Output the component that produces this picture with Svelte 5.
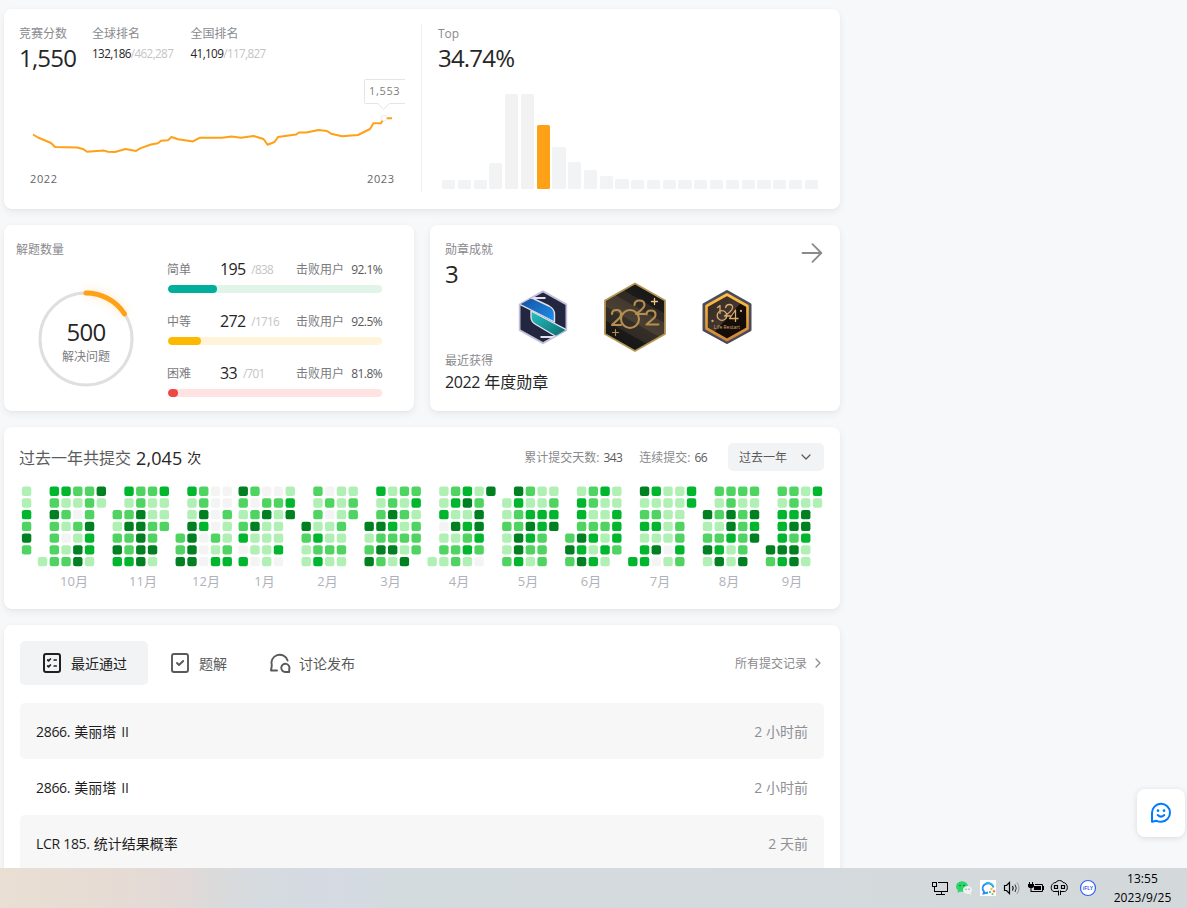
<script>
  const histogram = [9, 9, 9, 26, 95, 95, 64, 42, 27, 19, 13, 10, 9, 9, 9, 9, 9, 9, 9, 9, 9, 9, 9, 9];
  const levels = [
    { name: '简单', cls: 'easy', solved: 195, total: 838, beats: '92.1%', w: 49 },
    { name: '中等', cls: 'medium', solved: 272, total: 1716, beats: '92.5%', w: 33 },
    { name: '困难', cls: 'hard', solved: 33, total: 701, beats: '81.8%', w: 10 }
  ];
  const months = [
    { label: '', x: 74, cols: ['113242-'] },
    { label: '10月', x: 74, cols: ['------1', '3242222', '3121012', '2102144', '2224331', '41'] },
    { label: '11月', x: 143, cols: ['--21243', '3124223', '2244444', '2112241', '3112'] },
    { label: '12月', x: 206, cols: ['----224', '3114444', '2243000', '0000213', '0021123'] },
    { label: '1月', x: 264.5, cols: ['4212303', '2024110', '0241111', '0211130', '134'] },
    { label: '2月', x: 327.5, cols: ['---4211', '2121323', '0201121', '1112121', '122'] },
    { label: '3月', x: 390.5, cols: ['---4124', '3124242', '1243241', '2121214', '231222'] },
    { label: '4月', x: 459, cols: ['------1', '1130121', '2314122', '3413231', '1244320', '4'] },
    { label: '5月', x: 528, cols: ['-112112', '4322443', '2134321', '1133222', '1234'] },
    { label: '6月', x: 591, cols: ['----242', '1332434', '2212313', '3112131', '113332'] },
    { label: '7月', x: 660, cols: ['------3', '4123133', '3123140', '1111101', '1112232', '33'] },
    { label: '8月', x: 729, cols: ['--41241', '2121234', '2244311', '2122224', '21434'] },
    { label: '9月', x: 792, cols: ['-----42', '2133343', '2234244', '1144311', '31'] }
  ];
  const palette = ['#f4f4f4', '#b0f0b5', '#4fd462', '#00b62c', '#008020'];
  const cells = [];
  let cx = 1.9;
  for (const m of months) {
    for (const col of m.cols) {
      [...col].forEach((v, r) => {
        if (v !== '-') cells.push({ x: cx, y: 0.5 + r * 11.73, fill: palette[+v] });
      });
      cx += 11.75;
    }
    cx += 4.22;
  }
  const records = [
    ['2866.', '美丽塔', 'II', '2', '小时前'],
    ['2866.', '美丽塔', 'II', '2', '小时前'],
    ['LCR 185.', '统计结果概率', '', '2', '天前']
  ];
</script>

<div class="screen">
  <main>
    <section class="card contest">
      <div class="rating">
        <div class="stats">
          <div><p class="label">竞赛分数</p><p class="big n">1,550</p></div>
          <div class="rank"><p class="label">全球排名</p><p class="sm">132,186<i>/462,287</i></p></div>
          <div class="rank r2"><p class="label">全国排名</p><p class="sm">41,109<i>/117,827</i></p></div>
        </div>
        <svg class="line" width="385" height="115" viewBox="20 77 385 115">
          <path d="M33 134.5 38 137.5 51 143 55 147 77 147.5 83 149 87 151.8 104 150.6 108 151.8 115 152 125.5 149 136 151 140 148.4 151 144.5 158 143.3 161 140.8 168 140.3 171.5 137 178 139.3 193 141.4 199.5 137.8 222 137.8 231.5 136.4 241 137.8 253.5 136 263.5 139 267.5 144.8 274.5 142 278 137 296 134.6 299 132.5 306.5 132.4 318.5 130 327 131 331 133.7 342 136.3 358 135 370 129 373.5 123.3 381 123.2 384 118.3 392 118.3" fill="none" stroke="#ffa116" stroke-width="2" stroke-linejoin="round" />
          <path d="M406 79.5H365.500q-1 0-1 1V102.500q0 1 1 1H378L383.500 109.500 389.500 103.500H406" fill="#fff" stroke="#e5e5e5" />
          <circle cx="384" cy="118" r="2.7" fill="#fff" stroke="#ebebeb" />
          <text x="369" y="95" class="tip">1,553</text>
          <text x="30" y="183" class="year">2022</text>
          <text x="367" y="183" class="year">2023</text>
        </svg>
      </div>
      <div class="top">
        <p class="label">Top</p>
        <p class="big n">34.74%</p>
        <div class="bars">
          {#each histogram as h, i}
            <span class:on={i === 6} class:tall={h === 95} style="height:{h}px"></span>
          {/each}
        </div>
      </div>
    </section>

    <div class="pair">
      <section class="card solved">
        <div class="total">
          <p class="label">解题数量</p>
          <div class="ring">
            <svg width="120" height="120" viewBox="0 0 120 120">
              <circle cx="60" cy="60" r="46" fill="none" stroke="#dfdfdf" stroke-width="3" />
              <path d="M60 14A46 46 0 0 1 98.500 34.800" class="glow" />
              <path d="M60 14A46 46 0 0 1 98.500 34.800" fill="none" stroke="#ffa116" stroke-width="5" stroke-linecap="round" />
            </svg>
            <div class="count"><b class="n">500</b><span>解决问题</span></div>
          </div>
        </div>
        <div class="levels">
          {#each levels as l}
            <div class="level {l.cls}">
              <div class="info">
                <span class="name">{l.name}</span>
                <span class="num">{l.solved}</span>
                <span class="of">/{l.total}</span>
                <span class="beat">击败用户</span>
                <span class="pct">{l.beats}</span>
              </div>
              <div class="track"><div class="fill" style="width:{l.w}px"></div></div>
            </div>
          {/each}
        </div>
      </section>

      <section class="card medals">
        <div class="head">
          <div><p class="label">勋章成就</p><p class="big n">3</p></div>
          <svg width="24" height="24" viewBox="0 0 24 24" fill="none" stroke="#8a8a8e" stroke-width="1.8" stroke-linecap="round" stroke-linejoin="round"><path d="M2.500 12H21M12.500 3.200 21.300 12 12.500 20.800" /></svg>
        </div>
        <svg class="badges" width="250" height="76" viewBox="510 280 250 76">
          <defs>
            <linearGradient id="gold" x1="0" y1="0" x2="1" y2="1"><stop offset="0" stop-color="#e2bd73" /><stop offset=".5" stop-color="#8d6e3e" /><stop offset="1" stop-color="#d9b56d" /></linearGradient>
            <linearGradient id="brown" gradientUnits="userSpaceOnUse" x1="652" y1="287" x2="618" y2="347"><stop offset="0" stop-color="#171717" /><stop offset=".24" stop-color="#1c1b1a" /><stop offset=".25" stop-color="#2e2a25" /><stop offset=".36" stop-color="#312b25" /><stop offset=".37" stop-color="#443a2f" /><stop offset=".57" stop-color="#4a3f33" /><stop offset=".58" stop-color="#352f28" /><stop offset=".75" stop-color="#302b26" /><stop offset=".76" stop-color="#1b1a19" /><stop offset="1" stop-color="#151515" /></linearGradient>
            <linearGradient id="blue" x1="0" y1="0" x2="1" y2="1"><stop offset="0" stop-color="#174e9b" /><stop offset="1" stop-color="#1b91ed" /></linearGradient>
            <linearGradient id="teal" x1="0" y1="0" x2="1" y2="1"><stop offset="0" stop-color="#26c3c1" /><stop offset="1" stop-color="#0b6970" /></linearGradient>
            <linearGradient id="orange" x1="0" y1="0" x2="0" y2="1"><stop offset="0" stop-color="#ffc044" /><stop offset="1" stop-color="#d08638" /></linearGradient>
            <linearGradient id="night" x1="0" y1="0" x2="1" y2="1"><stop offset="0" stop-color="#352821" /><stop offset=".5" stop-color="#42362f" /><stop offset=".52" stop-color="#170e09" /><stop offset="1" stop-color="#100a06" /></linearGradient>
            <clipPath id="hex"><path d="M543 292 566 304.500V330L543 343 520 330V304.500Z" /></clipPath>
          </defs>
          <path d="M543 291.500 566 304.500V330L543 343 520 330V304.500Z" fill="#25294a" stroke="#c3bdd9" stroke-width="2.400" stroke-linejoin="round" />
          <path d="M543 292.500 565.500 305V329.500L543 342 520.500 329.500V305Z" fill="#22263f" />
          <g clip-path="url(#hex)" stroke="#e2e0ed" stroke-width="1.400" stroke-linejoin="round">
            <path d="M519 304 531 297.500 549 306Q554.500 309 554.500 314V322L543 316 519 304Z" fill="url(#blue)" />
            <path d="M531 311 567 330 556 336.500 535 324Q531 321.500 531 317Z" fill="url(#teal)" />
            <path d="M531 298H545.500M540.500 337H556" stroke-width="1.800" fill="none" />
          </g>
          <path d="M635 283.500 665 300.500V334L635 351 605 334V300.500Z" fill="url(#brown)" stroke="#b69656" stroke-width="1.800" stroke-linejoin="round" />
          <g fill="none" stroke="#b58f51" stroke-width="2.100" stroke-linejoin="round" stroke-linecap="round">
            <path d="M612 314Q612 310 616.500 310Q621 310 621 314Q621 316 619.500 318L612 325H621" />
            <circle cx="630" cy="319" r="9" />
            <path d="M634.500 305Q634.500 300.500 639.500 300.500Q644.500 300.500 644.500 305Q644.500 308 636 314H645" />
            <path d="M646.500 314.500Q646.500 310.500 651 310.500Q655.500 310.500 655.500 314.500Q655.500 316.500 654 318L646.500 324.500H658.500" />
            <path d="M654.500 298.500V304.500M651.500 301.500H657.500" stroke="#edc77c" stroke-width="1.300" /><path d="M615.500 329.500V335.500M612.500 332.500H618.500" stroke-width="1.100" />
          </g>
          <path d="M727 291.500 750 304.500V330L727 342.500 704 330V304.500Z" fill="#453f48" stroke="#4a4b59" stroke-width="3" stroke-linejoin="round" />
          <path d="M727 294.500 747.500 306V328.500L727 340 706.500 328.500V306Z" fill="url(#night)" stroke="url(#orange)" stroke-width="2.600" stroke-linejoin="round" />
          <g fill="none" stroke="#d8ae70" stroke-width="1.300" stroke-linejoin="round">
            <path d="M717 308 720 305.500V314" /><circle cx="722" cy="315.500" r="4.800" />
            <path d="M725.500 308Q726 304.500 729.500 304.500Q733 304.500 732.500 308Q732 311 724.500 316H731" />
            <path d="M735.500 322V310L729.500 318.500H738.500" />
            <circle cx="741" cy="311" r=".5" /><circle cx="712.500" cy="321" r=".5" />
          </g>
          <text x="727" y="328.800" class="life">Life Restart</text>
        </svg>
        <div class="latest"><p class="label">最近获得</p><p class="medal"><span>2022</span> 年度勋章</p></div>
      </section>
    </div>

    <section class="card calendar">
      <div class="head">
        <h2>过去一年共提交<b>2,045</b><em>次</em></h2>
        <p>累计提交天数:<b>343</b></p>
        <p class="streak">连续提交:<b>66</b></p>
        <button><span>过去一年</span><svg width="12" height="12" viewBox="0 0 12 12" fill="none" stroke="#595959" stroke-width="1.200" stroke-linecap="round" stroke-linejoin="round"><path d="M2 4 6 8 10 4" /></svg></button>
      </div>
      <svg class="heat" width="804" height="108" viewBox="0 0 804 108">
        {#each cells as c}<rect x={c.x} y={c.y} width="9.400" height="9.400" rx="2.200" fill={c.fill} />{/each}
        {#each months as m}<text x={m.x - 20} y="99.500">{m.label}</text>{/each}
      </svg>
    </section>

    <section class="card recent">
      <nav>
        <div class="tab active">
          <svg width="24" height="24" viewBox="0 0 24 24" fill="none" stroke="currentColor" stroke-width="2" stroke-linecap="round" stroke-linejoin="round"><rect x="4" y="3" width="16" height="18" rx="2" /><path d="M7.700 9 8.600 9.800 10.400 8M14.200 9H16.200M7.700 15 8.600 15.800 10.400 14M14.200 15H16.200" stroke-width="1.700" /></svg>
          <span>最近通过</span>
        </div>
        <div class="tab">
          <svg width="24" height="24" viewBox="0 0 24 24" fill="none" stroke="currentColor" stroke-width="1.900" stroke-linecap="round" stroke-linejoin="round"><rect x="4" y="3" width="16" height="18" rx="2" /><path d="M9 12 11 14 15.200 10" /></svg>
          <span>题解</span>
        </div>
        <div class="tab talk">
          <svg width="24" height="24" viewBox="0 0 24 24" fill="none" stroke="currentColor" stroke-width="1.900" stroke-linecap="round" stroke-linejoin="round"><path d="M19.600 9.500A8.200 8.200 0 1 0 3.800 14.500L3 19.500H9" /><path d="M21.200 21H17.300A4.100 4.100 0 1 1 21.200 18.300Z" /></svg>
          <span>讨论发布</span>
        </div>
        <div class="all"><span>所有提交记录</span><svg width="8" height="12" viewBox="0 0 8 12" fill="none" stroke="#8a8a8e" stroke-width="1.200" stroke-linecap="round" stroke-linejoin="round"><path d="M2 2 6 6 2 10" /></svg></div>
      </nav>
      {#each records as r, i}
        <div class="row" class:odd={i % 2 === 0}>
          <p class="title"><span class="l">{r[0]}</span>{r[1]}{#if r[2]}<span class="ii">{r[2]}</span>{/if}</p>
          <p class="ago"><span>{r[3]}</span> {r[4]}</p>
        </div>
      {/each}
    </section>
  </main>

  <div class="feedback">
    <svg width="24" height="24" viewBox="0 0 24 24" fill="none" stroke="#007aff" stroke-width="2" stroke-linecap="round" stroke-linejoin="round"><path d="M3 20.800V12A9 9 0 1 1 12.200 20.800Q9.500 20.800 7.500 19.800Z" /><path d="M8.700 14Q12 17.200 15.300 14" /><path d="M9 9.600V9.700M15 9.600V9.700" stroke-width="2.600" /></svg>
  </div>

  <footer>
    <div class="tray">
      <svg width="172" height="24" viewBox="930 876 172 24">
        <g fill="none" stroke="#000" shape-rendering="crispEdges"><path d="M938 882.500H947.500V891.500H934.500V887M941.500 892V894.500M936 894.500H945M932.500 882.500H936.500V886.500H932.500ZM934.500 886V891" /></g>
        <ellipse cx="962" cy="886.500" rx="6" ry="5.200" fill="#2bd56a" /><path d="M958 890 957.500 893 961 891Z" fill="#2bd56a" /><ellipse cx="967.500" cy="890" rx="4.500" ry="3.900" fill="#f0f2f1" /><path d="M968 893H971V895Z" fill="#f0f2f1" /><circle cx="960" cy="885.500" r=".8" fill="#08752e" /><circle cx="964" cy="885.500" r=".8" fill="#08752e" /><circle cx="966" cy="889.200" r=".6" fill="#777" /><circle cx="969" cy="889.200" r=".6" fill="#777" />
        <rect x="980" y="880" width="16" height="16" fill="#fff" /><path d="M993.500 887.500A5.500 4.800 0 1 0 984 891.500L983.500 893.500 988 892.500" fill="none" stroke="#2c8df0" stroke-width="1.800" /><path d="M986 883A5.500 4.800 0 0 1 993 886" fill="none" stroke="#36b6ee" stroke-width="1.800" /><circle cx="991.500" cy="889" r="1.200" fill="#f7bd3e" /><circle cx="990" cy="892" r="1.100" fill="#3ab66b" /><circle cx="994" cy="891.200" r="1.200" fill="#f0813c" /><circle cx="992.500" cy="894" r="1.100" fill="#6ccb63" />
        <path d="M1004.500 885.500H1006.500L1009.500 882.500V893.500L1006.500 890.500H1004.500Z" fill="none" stroke="#000" stroke-width="1.200" /><path d="M1012.500 886Q1014 888 1012.500 890.500" fill="none" stroke="#000" stroke-width="1.200" /><path d="M1015 884.500Q1017.500 888 1015 892" fill="none" stroke="#333" /><path d="M1017 882.500Q1021 888 1017 894" fill="none" stroke="#999" />
        <path d="M1035 884.500H1042.500V891.500H1033.500" fill="none" stroke="#000" /><path d="M1034 886H1041V890H1034ZM1043 886H1044V890H1043ZM1028 884H1034V886Q1034 888 1031 888Q1028 888 1028 886ZM1029 882H1030V884H1029ZM1032 882H1033V884H1032ZM1030.500 888H1031.500V891H1034V892H1030.500Z" />
        <g fill="none" stroke="#000" stroke-width="1"><path d="M1058.500 890.500V895.500M1060.500 890.500V895M1056 882.500Q1056.500 880.500 1059.500 880.500Q1062.500 880.500 1063 882.500" /><path d="M1056 882.500C1050 882.500 1050 891.500 1054 891.500H1058.500M1063 882.500C1068.500 882.500 1068.500 891.500 1064.500 891.500H1060.500" /><path d="M1054.500 885.500H1057.500V888.500H1054.500ZM1061.500 885.500H1064.500V888.500H1061.500Z" stroke-width="1.200" /></g>
        <circle cx="1088" cy="888" r="7.500" fill="#fff" stroke="#365ee8" stroke-width="1.200" /><text x="1088" y="890" class="fly">iFLY</text>
      </svg>
    </div>
    <div class="clock"><span>13:55</span><span>2023/9/25</span></div>
  </footer>
</div>

<style>
  :global(body) { background: #f7f8fa; }
  .screen { position: relative; width: 1187px; height: 908px; overflow: hidden; background: #f7f8fa; color: #262626; font: 12px/16px "Open Sans", "Noto Sans CJK SC", sans-serif; display: flex; flex-direction: column; }
  p, h2 { margin: 0; font-weight: 400; }
  i, em { font-style: normal; }
  b { font-weight: 400; }
  main { width: 836px; height: 859px; padding: 9px 0 0 4px; display: flex; flex-direction: column; gap: 16px; flex: none; }
  .card { background: #fff; border-radius: 8px; box-shadow: 0 3px 8px rgba(0,0,0,.06), 0 1px 3px rgba(0,0,0,.03); box-sizing: border-box; flex: none; }
  .label { color: #8a8a8e; font-size: 12px; line-height: 16px; white-space: nowrap; }
  .big { font-size: 24px; line-height: 32px; }
  .n { letter-spacing: -.8px; }
  .contest { height: 200px; display: flex; }
  .rating { width: 417px; padding: 17px 0 0 16px; box-sizing: border-box; flex: none; }
  .stats { display: flex; height: 51px; margin-left: -1px; }
  .stats > div { width: 73px; }
  .stats > .rank { width: 98.500px; }
  .sm { font-size: 12px; letter-spacing: -.72px; line-height: 20px; margin-top: 1px; }
  .rank .sm { font-size: 11.700px; letter-spacing: -.62px; }
  .sm i { color: #c4c4c6; }
  .line { display: block; }
  .tip { font-size: 11px; fill: #7d7d7d; letter-spacing: .65px; }
  .year { font-size: 11px; fill: #666; letter-spacing: .6px; }
  .top { border-left: 1px solid #f0f0f1; margin: 15px 21px 17px 0; padding: 2px 0 0 16px; flex: 1; }
  .bars { height: 98px; margin: 17px 0 0 4px; width: 376px; display: flex; align-items: flex-end; justify-content: space-between; }
  .bars span { width: 13.200px; background: #f2f3f5; border-radius: 1.500px; }
  .bars .tall { background: #f2f2f2; }
  .bars .on { background: #ffa116; }
  .pair { display: grid; grid-template: 186px / 410px 410px; gap: 16px; height: 186px; flex: none; }
  .solved { display: flex; padding: 17px 32px 0 12px; }
  .total { width: 152px; flex: none; }
  .ring { width: 120px; height: 120px; margin: 21px 0 0 10px; display: grid; }
  .ring > * { grid-area: 1 / 1; }
  .ring svg { overflow: visible; }
  .glow { fill: none; stroke: #ffa116; stroke-width: 6; opacity: .25; filter: blur(5px); }
  .count { display: flex; flex-direction: column; align-items: center; padding-top: 37px; }
  .count b { font-size: 24px; line-height: 32px; }
  .count span { color: #7b7b80; line-height: 18px; }
  .levels { flex: 1; padding-top: 17px; }
  .level { height: 52px; }
  .info { display: flex; align-items: center; height: 22px; white-space: nowrap; }
  .name { width: 53px; color: #7b7b80; margin-left: -1px; }
  .num { font-size: 16px; letter-spacing: -.7px; margin-right: 6px; margin-top: -2px; }
  .of { color: #c4c4c6; font-size: 11.700px; letter-spacing: -.65px; margin-top: -3px; }
  .beat { margin-left: auto; color: #7b7b80; }
  .pct { width: 38px; text-align: right; color: #595959; letter-spacing: -.6px; }
  .track { height: 8px; margin-top: 4px; border-radius: 4px; overflow: hidden; }
  .fill { height: 8px; border-radius: 4px; }
  .easy .track { background: #e0f4e7; } .easy .fill { background: #00af9b; }
  .medium .track { background: #fff3da; } .medium .fill { background: #ffb800; }
  .hard .track { background: #ffe2e2; } .hard .fill { background: #ef4743; }
  .medals { padding: 17px 16px 0 15px; display: flex; flex-direction: column; }
  .medals .head { display: flex; justify-content: space-between; height: 38px; flex: none; }
  .head > svg { margin-top: -1px; }
  .badges { display: block; margin-left: 65px; flex: none; }
  .life { font: 5px "Open Sans", sans-serif; fill: #d8ae70; text-anchor: middle; }
  .latest .label { margin-top: -3px; }
  .medal { font-size: 16px; line-height: 24px; white-space: nowrap; margin-top: 1px; }
  .medal span { letter-spacing: -.4px; }
  .calendar { height: 182px; padding: 16px 16px 16px 15px; }
  .calendar .head { display: flex; align-items: center; height: 28px; color: #8a8a8e; white-space: nowrap; }
  .calendar .head p { padding-top: 2px; }
  h2 { flex: 1; font-size: 16px; color: #5c5c5c; display: flex; align-items: center; line-height: 28px; padding-top: 2px; }
  h2 b { font-size: 18px; letter-spacing: .1px; color: #262626; margin: 0 5px 0 5px; }
  h2 em { font-size: 14px; color: #262626; }
  .calendar p b { color: #595959; letter-spacing: -.6px; margin-left: 4px; }
  .calendar .streak { margin: 0 21px 0 17px; }
  button { border: 0; padding: 0 12px 0 11px; border-radius: 5px; width: 96px; height: 28px; background: #f2f3f5; color: #595959; font: inherit; display: flex; align-items: center; justify-content: space-between; }
  button span { padding-top: 1px; }
  .heat { display: block; margin: 15px 0 0 1px; }
  .heat text { font-size: 13px; fill: #afb2ba; text-anchor: middle; }
  .recent { height: 300px; padding: 16px; }
  nav { display: flex; align-items: center; height: 44px; margin-bottom: 18px; }
  .tab { display: flex; align-items: center; height: 44px; width: 100px; padding: 0 0 0 20px; box-sizing: border-box; color: #595959; font-size: 14px; gap: 7px; white-space: nowrap; }
  .tab span { padding-top: 2px; }
  .tab.active { width: 128px; background: #f2f3f5; border-radius: 5px; color: #202020; }
  .tab.talk { width: 150px; }
  .all { margin-left: auto; display: flex; align-items: center; gap: 7px; color: #8a8a8e; padding-right: 2px; }
  .all span { padding-top: 2px; }
  .row { height: 56px; padding: 1px 16px 0; display: flex; justify-content: space-between; align-items: center; font-size: 14px; border-radius: 5px; box-sizing: border-box; }
  .odd { background: #f7f7f7; }
  .title { color: #1d1d1d; }
  .title span { letter-spacing: -.3px; margin-right: 4px; }
  .title .ii { margin: 0 0 0 5px; letter-spacing: 0; }
  .ago { color: #8f8f95; }
  .feedback { position: absolute; left: 1137px; top: 789px; width: 48px; height: 48px; border-radius: 8px; background: #fff; box-shadow: 0 1px 6px rgba(0,0,0,.12); display: grid; place-items: center; }
  footer { position: relative; height: 40px; flex: none; background: linear-gradient(90deg, #e9dfd3 0, #e6dbd4 120px, #e3dad8 175px, #dadada 215px, #d6dbe0 260px, #d5dae3 335px, #d4dbdf 390px, #d4dadd 600px, #d3d9db 100%); color: #000; display: flex; justify-content: flex-end; }
  .tray { padding-top: 8px; width: 172px; }
  .tray svg { display: block; }
  .fly { font: bold 5px "Liberation Sans", sans-serif; fill: #365ee8; text-anchor: middle; }
  .clock { width: 85px; display: flex; flex-direction: column; align-items: center; line-height: 19px; padding: 1px 4px 0 0; box-sizing: border-box; font-size: 12px; letter-spacing: .1px; }
</style>
